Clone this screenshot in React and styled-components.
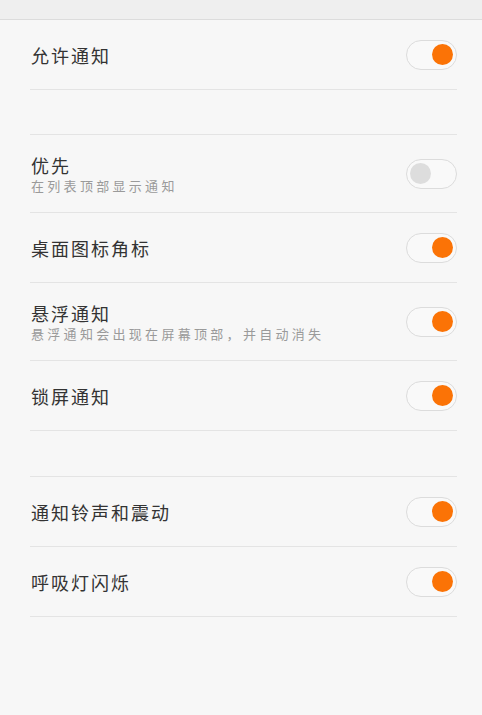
import React from "react";
import styled, { createGlobalStyle } from "styled-components";

const GlobalStyle = createGlobalStyle`
  body {
    margin: 0;
    background: #f7f7f7;
    font-family: "Noto Sans CJK SC", "Noto Sans", sans-serif;
  }
`;

const groups = [
  [{ title: "允许通知", on: true }],
  [
    { title: "优先", sub: "在列表顶部显示通知", on: false },
    { title: "桌面图标角标", on: true },
    { title: "悬浮通知", sub: "悬浮通知会出现在屏幕顶部，并自动消失", on: true },
    { title: "锁屏通知", on: true },
  ],
  [
    { title: "通知铃声和震动", on: true },
    { title: "呼吸灯闪烁", on: true },
  ],
];

export default function App() {
  return (
    <Page>
      <GlobalStyle />
      <TopBar />
      {groups.map((rows, gi) => (
        <Group key={gi} first={gi === 0} gap={gi === 2 ? 45 : 44}>
          {rows.map((row) => (
            <Row key={row.title} tall={!!row.sub}>
              <Texts>
                <Title>{row.title}</Title>
                {row.sub && <Sub>{row.sub}</Sub>}
              </Texts>
              <Switch on={row.on}>
                <Knob on={row.on} />
              </Switch>
            </Row>
          ))}
        </Group>
      ))}
    </Page>
  );
}

const Page = styled.div`
  min-height: 715px;
  background: #f7f7f7;
`;

const TopBar = styled.div`
  height: 19px;
  background: #efefef;
  border-bottom: 1px solid #dcdcdc;
`;

const Group = styled.div`
  margin: ${(p) => (p.first ? 0 : p.gap)}px 25px 0 30px;
  border-top: ${(p) => (p.first ? "none" : "1px solid #e4e4e4")};
`;

const Row = styled.div`
  display: flex;
  align-items: center;
  justify-content: space-between;
  height: ${(p) => (p.tall ? 77 : 69)}px;
  border-bottom: 1px solid #e4e4e4;
`;

const Texts = styled.div`
  display: flex;
  flex-direction: column;
  padding-left: 1px;
`;

const Title = styled.div`
  font-size: 18px;
  line-height: 24px;
  letter-spacing: 2px;
  color: #333;
`;

const Sub = styled.div`
  font-size: 13px;
  line-height: 18px;
  letter-spacing: 3.3px;
  color: #9a9a9a;
`;

const Switch = styled.div`
  box-sizing: border-box;
  width: 51px;
  height: 30px;
  border: 1px solid #dcdcdc;
  border-radius: 15px;
  background: #f9f9f9;
  display: flex;
  align-items: center;
  justify-content: ${(p) => (p.on ? "flex-end" : "flex-start")};
  padding: 0 3px;
`;

const Knob = styled.div`
  width: 21px;
  height: 21px;
  border-radius: 50%;
  background: ${(p) => (p.on ? "#fb7306" : "#dddddd")};
`;
